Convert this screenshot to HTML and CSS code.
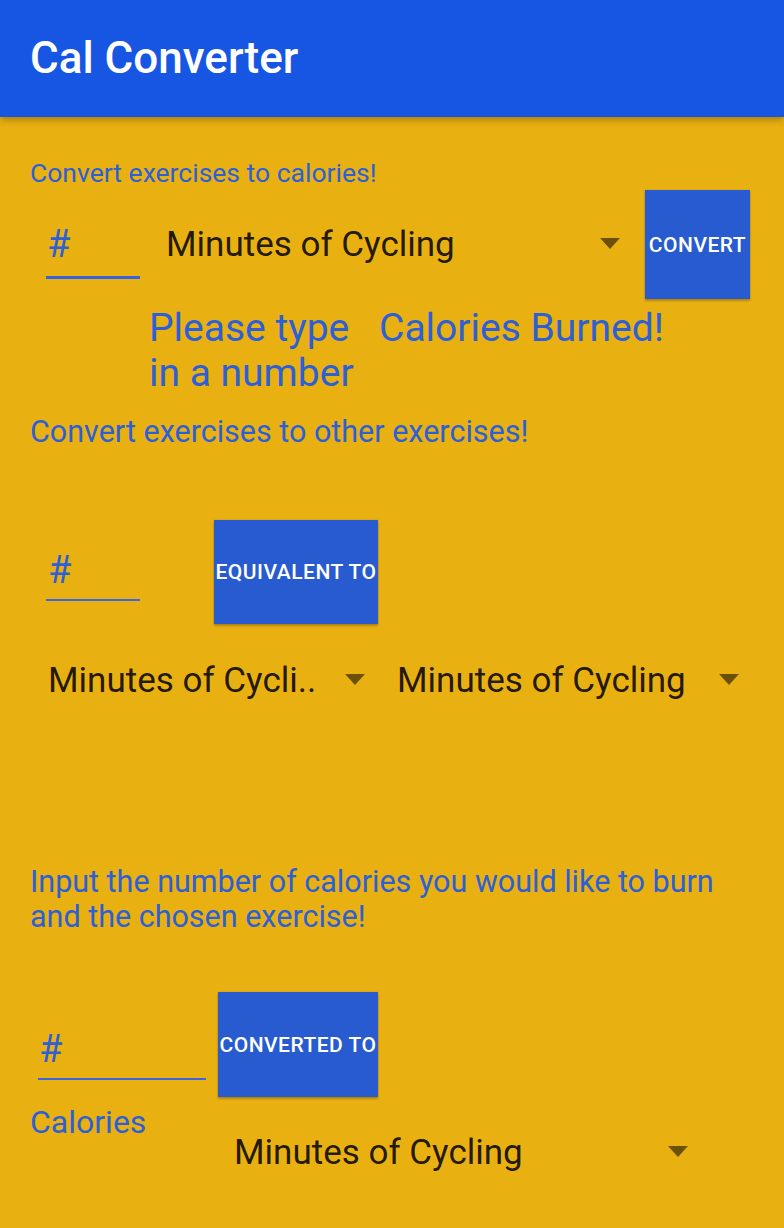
FILE: index.html
```html
<!DOCTYPE html>
<html lang="en">
<head>
<meta charset="utf-8">
<title>Cal Converter</title>
<link rel="stylesheet" href="styles.css">
</head>
<body>
<header class="appbar">
  <h1 class="title">Cal Converter</h1>
</header>
<main class="content">
  <p class="label label-small">Convert exercises to calories!</p>
  <div class="row row-one">
    <div class="field field-one focused"><span class="hint">#</span></div>
    <div class="spinner spinner-one"><span class="spin-text">Minutes of Cycling</span><span class="arrow"></span></div>
    <button class="btn btn-convert">CONVERT</button>
  </div>
  <div class="results">
    <p class="result result-msg">Please type<br>in a number</p>
    <p class="result">Calories Burned!</p>
  </div>

  <p class="label label-two">Convert exercises to other exercises!</p>
  <div class="row row-two">
    <div class="field field-two"><span class="hint">#</span></div>
    <button class="btn btn-equiv">EQUIVALENT TO</button>
  </div>
  <div class="row spin-row">
    <div class="spinner spinner-a"><span class="spin-text">Minutes of Cycli..</span><span class="arrow"></span></div>
    <div class="spinner spinner-b"><span class="spin-text">Minutes of Cycling</span><span class="arrow"></span></div>
  </div>

  <p class="label label-three">Input the number of calories you would like to burn and the chosen exercise!</p>
  <div class="row row-three">
    <div class="field field-three"><span class="hint">#</span></div>
    <button class="btn btn-converted">CONVERTED TO</button>
  </div>
  <div class="row cal-row">
    <p class="cal-label">Calories</p>
    <div class="spinner spinner-c"><span class="spin-text">Minutes of Cycling</span><span class="arrow"></span></div>
  </div>
</main>
</body>
</html>
```

FILE: styles.css
```css
* { box-sizing: border-box; }

html, body {
  margin: 0;
  padding: 0;
}

body {
  background: #e9b012;
  font-family: Roboto, "Noto Sans", "Liberation Sans", sans-serif;
  width: 784px;
  height: 1228px;
  overflow: hidden;
}

.appbar {
  height: 117px;
  background: #1756e3;
  padding-left: 30px;
  box-shadow: 0 3px 7px rgba(0, 0, 0, 0.28);
  position: relative;
  z-index: 1;
}

.title {
  margin: 0;
  font-size: 44px;
  font-weight: 500;
  line-height: 117px;
  color: #ffffff;
}

.content {
  padding: 0 30px;
}

.label {
  margin: 0;
  color: #2d5fd6;
}

.label-small {
  font-size: 26.5px;
  line-height: 32px;
  margin-top: 40px;
}

.row {
  display: flex;
  align-items: flex-start;
}

.row-one {
  margin-top: 1px;
}

.field {
  border-bottom: 2px solid #3a66dc;
}

.field.focused {
  border-bottom-width: 3px;
  border-bottom-color: #3563e0;
}

.hint {
  display: block;
  font-size: 38px;
  line-height: 44px;
  color: #2d5fd6;
}

.field-one {
  width: 94px;
  margin-left: 16px;
  margin-top: 32px;
  padding-bottom: 10px;
  padding-left: 1px;
}

.spinner {
  display: flex;
  align-items: center;
}

.spin-text {
  font-size: 35px;
  line-height: 42px;
  color: rgba(0, 0, 0, 0.87);
  white-space: nowrap;
}

.arrow {
  margin-left: auto;
  width: 0;
  height: 0;
  border-left: 10px solid transparent;
  border-right: 10px solid transparent;
  border-top: 11px solid rgba(0, 0, 0, 0.54);
  margin-bottom: 3px;
}

.spinner-one {
  width: 454px;
  margin-left: 26px;
  margin-top: 34px;
}

.btn {
  border: none;
  padding: 0;
  margin: 0;
  background: #285bd0;
  color: #ffffff;
  font-family: Roboto, "Noto Sans", "Liberation Sans", sans-serif;
  font-size: 21px;
  font-weight: 500;
  letter-spacing: 0.5px;
  white-space: nowrap;
  box-shadow: 0 2px 2px rgba(0, 0, 0, 0.22), 0 0 2px rgba(0, 0, 0, 0.12);
  display: flex;
  align-items: center;
  justify-content: center;
}

.btn-convert {
  width: 105px;
  height: 109px;
  margin-left: 25px;
}

.results {
  display: flex;
  margin-top: 7px;
}

.result {
  margin: 0;
  font-size: 39px;
  line-height: 45px;
  color: #2d5fd6;
  white-space: nowrap;
}

.result-msg {
  width: 230px;
  margin-left: 119px;
}

.label-two {
  font-size: 30.5px;
  line-height: 36px;
  margin-top: 18px;
}

.row-two {
  margin-top: 70px;
}

.field-two {
  width: 94px;
  margin-left: 16px;
  margin-top: 28px;
  padding-bottom: 7px;
  padding-left: 2px;
}

.btn-equiv {
  width: 164px;
  height: 104px;
  margin-left: 74px;
}

.spin-row {
  margin-top: 36px;
}

.spinner-a {
  width: 317px;
  margin-left: 18px;
}

.spinner-b {
  width: 342px;
  margin-left: 32px;
}

.label-three {
  font-size: 30.5px;
  line-height: 35px;
  margin-top: 162px;
  max-width: 720px;
}

.row-three {
  margin-top: 58px;
}

.field-three {
  width: 168px;
  margin-left: 8px;
  margin-top: 35px;
  padding-bottom: 7px;
  padding-left: 1px;
}

.btn-converted {
  width: 160px;
  height: 105px;
  margin-left: 12px;
}

.cal-row {
  margin-top: 6px;
}

.cal-label {
  margin: 0;
  width: 204px;
  font-size: 32px;
  line-height: 38px;
  color: #2d5fd6;
}

.spinner-c {
  width: 454px;
  margin-top: 29px;
}
```
